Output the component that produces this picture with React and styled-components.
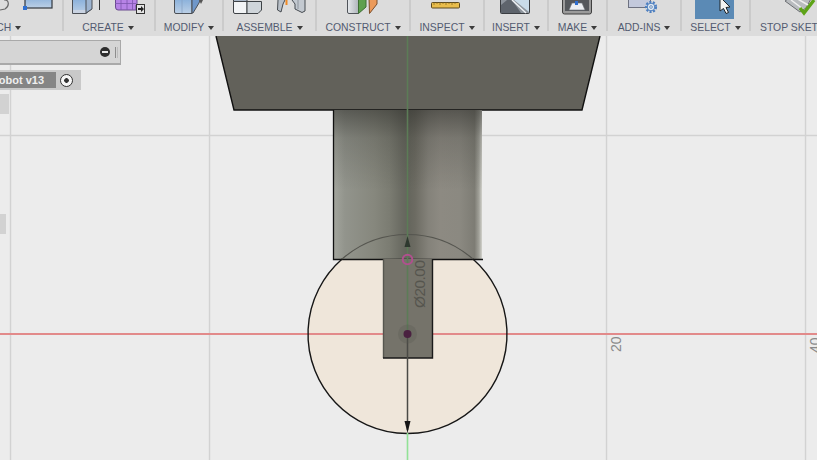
import { Fragment } from "react";
import styled, { createGlobalStyle } from "styled-components";

const GlobalStyle = createGlobalStyle`
  html, body {
    margin: 0;
    padding: 0;
    overflow: hidden;
    background: #ececec;
  }
`;

const Page = styled.div`
  width: 817px;
  height: 460px;
  display: flex;
  flex-direction: column;
  overflow: hidden;
  font-family: "Liberation Sans", Arial, sans-serif;
`;

const Toolbar = styled.div`
  height: 36px;
  flex: none;
  display: flex;
  background: #dcdcdc;
`;

const Group = styled.div`
  flex: none;
  width: ${(p) => p.$w}px;
  display: flex;
  flex-direction: column;
  align-items: center;
  overflow: hidden;
`;

const GroupIcons = styled.svg`
  display: block;
  flex: none;
  width: ${(p) => p.$w}px;
  height: 20px;
`;

const Label = styled.div`
  display: flex;
  align-items: center;
  gap: 4px;
  height: 13px;
  margin-top: 1px;
  font-size: 10.4px;
  white-space: nowrap;
  color: #525a70;
  transform: translateX(${(p) => p.$nudge || 0}px);
  align-self: ${(p) => p.$align || "center"};
`;

const Caret = styled.span`
  width: 0;
  height: 0;
  border-left: 3px solid transparent;
  border-right: 3px solid transparent;
  border-top: 4px solid #3c3c3c;
`;

const Separator = styled.div`
  flex: none;
  width: 2px;
  height: 31px;
  background: #cbcbcb;
`;

const Canvas = styled.div`
  position: relative;
  flex: 1;
  min-height: 0;
  background: #ececec;
`;

const Scene = styled.svg`
  display: block;
  width: 817px;
  height: 424px;
`;

const Browser = styled.div`
  position: absolute;
  left: 0;
  top: 4px;
  display: flex;
  flex-direction: column;
  align-items: flex-start;
`;

const BrowserHeader = styled.div`
  width: 121px;
  height: 25px;
  box-sizing: border-box;
  display: flex;
  align-items: center;
  justify-content: flex-end;
  gap: 5px;
  padding-right: 2px;
  background: #d5d5d5;
  border: 1px solid #a9a9a9;
  border-left: 0;
  border-bottom-width: 2px;
`;

const MinusButton = styled.span`
  position: relative;
  width: 10px;
  height: 10px;
  border-radius: 50%;
  background: #2e2e2e;

  &::after {
    content: "";
    position: absolute;
    left: 2px;
    right: 2px;
    top: 4px;
    height: 2px;
    background: #e8e8e8;
  }
`;

const Grip = styled.span`
  width: 1px;
  height: 11px;
  border-left: 1px solid #8d8d8d;
  border-right: 1px solid #bcbcbc;
`;

const DocumentRow = styled.div`
  margin-top: 5px;
  width: 81px;
  height: 20px;
  display: flex;
  align-items: center;
  justify-content: space-between;
  padding-right: 8px;
  box-sizing: border-box;
  background: #c9c9c9;
`;

const DocumentName = styled.div`
  width: 56px;
  height: 16px;
  display: flex;
  align-items: center;
  justify-content: flex-end;
  padding-right: 12px;
  box-sizing: border-box;
  overflow: hidden;
  white-space: nowrap;
  background: #858585;
  color: #efefef;
  font-size: 11px;
  font-weight: bold;
`;

const RadioButton = styled.span`
  width: 13px;
  height: 13px;
  box-sizing: border-box;
  border: 1.5px solid #333;
  border-radius: 50%;
  background: radial-gradient(circle, #333 0 2px, #f6f6f6 2.6px);
`;

const TreeStub = styled.div`
  width: ${(p) => p.$w}px;
  height: 20px;
  margin-top: ${(p) => p.$top}px;
  background: #d2d2d2;
`;

const SketchIcon = () => (
  <>
    <path d="M4 0 C9 -1 10 6 5 9 L0 10" fill="none" stroke="#666" strokeWidth="1.2" />
    <rect x="25" y="-4" width="27" height="12" fill="url(#toolBlue)" stroke="#33383e" strokeWidth="1.2" />
    <rect x="23" y="6" width="4" height="4" fill="#2f6fd0" />
  </>
);

const CreateIcon = () => (
  <>
    <path d="M72.5 -2 H91.5 V9 L86 13.5 H72.5 Z" fill="url(#toolBlue)" stroke="#4b4f55" />
    <path d="M73 10 H86 V13 H73 Z" fill="#c9d3e2" />
    <path d="M86 -2 H92 V9 L86 13 Z" fill="#9db4d0" stroke="#4b4f55" />
    <path d="M99.5 0 V10" stroke="#333" strokeWidth="1" />
    <path d="M115.5 -2 H137 V5 H136 V10 H118 Q115.5 10 115.5 7 Z" fill="#b783e6" stroke="#6a4a90" />
    <path d="M115 3.5 H136 M121 0 V10 M127 0 V10 M132.5 0 V10" stroke="#7d55ad" strokeWidth="0.8" />
    <rect x="136.5" y="4.5" width="8" height="9" fill="#e4e4e4" stroke="#333" />
    <path d="M138 8 H141 V6 L144 9 L141 12 V10 H138 Z" fill="#222" />
  </>
);

const ModifyIcon = () => (
  <>
    <path d="M174.5 -2 H192 V13.5 H176 Q174.5 13.5 174.5 12 Z" fill="url(#toolBlue)" stroke="#4b4f55" />
    <path d="M192 -2 H201 L199 3 L193 13 H192 Z" fill="#6f97c9" stroke="#4b4f55" />
    <path d="M199 0 L203 0 L201 4 Z" fill="#555" />
    <path d="M182 0 V13" stroke="#88a2c4" strokeWidth="0.8" />
  </>
);

const AssembleIcon = () => (
  <>
    <path d="M233.5 1.5 H247 V13.5 H235 Q233.5 13.5 233.5 12 Z" fill="#f2f4f6" stroke="#3e4246" />
    <path d="M247 1.5 H261.5 V10 L258 13.5 H247 Z" fill="#cfd5da" stroke="#3e4246" />
    <path d="M233.5 -2 V1.5 H247 V-2 Z" fill="#a9b6c6" stroke="#3e4246" />
    <path d="M278 0 L277.5 10 L281 12 L283 4 L285 0" fill="#b9c0c8" stroke="#454a50" />
    <path d="M286.5 0 V5" stroke="#f08a24" strokeWidth="2" />
    <path d="M292 0 L295 4 V9 L302 12.5 L305 11 V0" fill="#c3c9d0" stroke="#454a50" />
    <path d="M298 0 V9" stroke="#8d949c" />
  </>
);

const ConstructIcon = () => (
  <>
    <path d="M347.5 -2 H358.5 V13.5 H349 Q347.5 13.5 347.5 12 Z" fill="url(#toolGrey)" stroke="#50545a" />
    <path d="M358.5 -2 H366 V7 L358.5 13.5 Z" fill="#5ea04e" stroke="#3d6e34" />
    <path d="M369 -2 H377 V4 L369.5 13.5 Z" fill="#ec9a5a" stroke="#7a4d2a" />
  </>
);

const InspectIcon = () => (
  <>
    <rect x="431.5" y="2.5" width="28" height="5.5" rx="1" fill="#e9bd4c" stroke="#5d4a20" />
    <path d="M434 2.5 V5 M437 2.5 V4 M440 2.5 V5 M443 2.5 V4 M446 2.5 V5 M449 2.5 V4 M452 2.5 V5 M455 2.5 V4" stroke="#8c6f23" strokeWidth="0.8" />
  </>
);

const InsertIcon = () => (
  <>
    <rect x="500.5" y="-3" width="29" height="16.5" rx="1" fill="#8e959d" stroke="#3a3d41" />
    <path d="M501 13 V5 L507 0 H512 L521 13 Z" fill="#5e646c" />
    <path d="M514 0 L529 12 V0 Z" fill="#c9dbe9" />
    <path d="M512 0 L526 13" stroke="#f0f3f6" strokeWidth="1.4" />
  </>
);

const MakeIcon = () => (
  <>
    <rect x="562.5" y="-3" width="29" height="17" rx="2" fill="#9b9b9b" stroke="#3f3f3f" />
    <rect x="565" y="-1" width="24" height="12" fill="#55585c" />
    <path d="M569 10 L572 3 H582 L585 10 Z" fill="#eceff2" stroke="#6c7075" strokeWidth="0.6" />
    <path d="M576.5 1 V5" stroke="#2f6fd0" strokeWidth="3" />
  </>
);

const AddInsIcon = () => (
  <>
    <rect x="628.5" y="-3" width="22" height="10.5" fill="#c3c9dc" stroke="#6d7180" />
    <circle cx="651" cy="7" r="4.8" fill="none" stroke="#4d7fc0" strokeWidth="2.6" strokeDasharray="2 1.4" />
    <circle cx="651" cy="7" r="3.8" fill="#dfe8f2" stroke="#4d7fc0" strokeWidth="1" />
    <circle cx="651" cy="7" r="1.4" fill="#dcdcdc" stroke="#4d7fc0" strokeWidth="0.7" />
  </>
);

const SelectIcon = () => (
  <>
    <rect x="695" y="-2" width="39" height="21" fill="#5b8ab5" />
    <path d="M720 -3 L720 11 L723.5 8.5 L726 13.5 L728.5 12.5 L726 7.5 L730 7 Z" fill="#f4f4f4" stroke="#1f2428" strokeWidth="1" />
  </>
);

const StopSketchIcon = () => (
  <>
    <path d="M785 1 L791 -3 L812 -3 L806 8 L800 12 Z" fill="#b9bcbf" stroke="#6b6e72" />
    <path d="M791 0 L803 9 M796 -2 L808 5" stroke="#efefef" strokeWidth="1.5" />
    <path d="M800 8 L804 13 L814 0" fill="none" stroke="#5da317" strokeWidth="3.4" />
  </>
);

// x0 / x1 are the page columns of each group, the icons are drawn in page coordinates
const groups = [
  { x0: 0, x1: 62, label: "SKETCH", icon: SketchIcon, align: "flex-start", nudge: -31 },
  { x0: 64, x1: 154, label: "CREATE", icon: CreateIcon, nudge: -1 },
  { x0: 156, x1: 222, label: "MODIFY", icon: ModifyIcon },
  { x0: 224, x1: 315, label: "ASSEMBLE", icon: AssembleIcon },
  { x0: 317, x1: 409, label: "CONSTRUCT", icon: ConstructIcon },
  { x0: 411, x1: 483, label: "INSPECT", icon: InspectIcon },
  { x0: 485, x1: 547, label: "INSERT", icon: InsertIcon },
  { x0: 549, x1: 606, label: "MAKE", icon: MakeIcon },
  { x0: 608, x1: 680, label: "ADD-INS", icon: AddInsIcon },
  { x0: 682, x1: 749, label: "SELECT", icon: SelectIcon },
  { x0: 751, x1: 817, label: "STOP SKETCH", icon: StopSketchIcon, align: "flex-start", nudge: 9, noCaret: true, last: true },
];

function ToolGroup({ x0, x1, label, icon: Icon, align, nudge, noCaret }) {
  const w = x1 - x0;
  return (
    <Group $w={w}>
      <GroupIcons $w={w} viewBox={`${x0} 0 ${w} 20`}>
        <Icon />
      </GroupIcons>
      <Label $align={align} $nudge={nudge}>
        {label}
        {!noCaret && <Caret />}
      </Label>
    </Group>
  );
}

function CadScene() {
  return (
    <Scene viewBox="0 36 817 424">
      <defs>
        <linearGradient id="cylinderShade" x1="333" x2="482" y1="0" y2="0" gradientUnits="userSpaceOnUse">
          <stop offset="0" stopColor="#a4a69e" />
          <stop offset="0.08" stopColor="#92948c" />
          <stop offset="0.28" stopColor="#86877d" />
          <stop offset="0.38" stopColor="#7b7c72" />
          <stop offset="0.46" stopColor="#6a6b62" />
          <stop offset="0.5" stopColor="#64655c" />
          <stop offset="0.55" stopColor="#6c6b62" />
          <stop offset="0.64" stopColor="#84827a" />
          <stop offset="0.72" stopColor="#8d8a82" />
          <stop offset="0.85" stopColor="#8b8981" />
          <stop offset="0.95" stopColor="#7d7c74" />
          <stop offset="0.98" stopColor="#a2a29a" />
          <stop offset="1" stopColor="#d2d2cc" />
        </linearGradient>
        <linearGradient id="cylinderTop" x1="0" x2="0" y1="110" y2="190" gradientUnits="userSpaceOnUse">
          <stop offset="0" stopColor="#2c2c28" stopOpacity="0.55" />
          <stop offset="0.35" stopColor="#2c2c28" stopOpacity="0.2" />
          <stop offset="1" stopColor="#2c2c28" stopOpacity="0" />
        </linearGradient>
      </defs>

      {/* grid */}
      <path d="M10.5 36 V460 M209.5 36 V460 M606.5 36 V460 M805.5 36 V460 M0 135.5 H817" stroke="#d2d2d2" strokeWidth="1.4" />
      <text transform="translate(621 352) rotate(-90)" fontFamily="Liberation Sans" fontSize="14" fill="#8a8a8a">20</text>
      <text transform="translate(820 353) rotate(-90)" fontFamily="Liberation Sans" fontSize="14" fill="#8a8a8a">40</text>

      {/* sketch profile */}
      <circle cx="407.5" cy="334" r="99.5" fill="#efe6da" />
      <path d="M0 334 H817" stroke="#e28a8a" strokeWidth="2" />

      {/* body */}
      <path d="M216 36 H600 L582 110 H234 Z" fill="#62615a" />
      <path d="M216 36 L234 110 H582 L600 36" fill="none" stroke="#111" strokeWidth="1.4" />
      <rect x="333" y="110" width="149" height="149" fill="url(#cylinderShade)" />
      <rect x="333" y="110" width="149" height="149" fill="url(#cylinderTop)" />
      <path d="M333.5 110 V259.5 H483" fill="none" stroke="#111" strokeWidth="1.3" />

      <rect x="383" y="259" width="50" height="99" fill="#75736a" />
      <path d="M383.5 259 V358" fill="none" stroke="#56564f" strokeWidth="1.4" />
      <path d="M383 358 H432.5 V259" fill="none" stroke="#1a1a1a" strokeWidth="1.4" />

      {/* circle outline, fainter where it runs over the cylinder */}
      <path d="M342.1 259 A99.5 99.5 0 0 1 472.9 259" fill="none" stroke="#55554f" strokeWidth="1.2" />
      <path d="M472.9 259 A99.5 99.5 0 1 1 342.1 259" fill="none" stroke="#161616" strokeWidth="1.4" />

      {/* axis */}
      <path d="M407.5 36 V334" stroke="#5c7c57" strokeWidth="1.6" />
      <path d="M407.5 433 V460" stroke="#92e296" strokeWidth="1.6" />

      {/* diameter dimension */}
      <path d="M407.5 334 V430" stroke="#4a4a46" strokeWidth="1.5" />
      <path d="M404.5 421 H410.5 L407.5 433 Z" fill="#151515" />
      <path d="M407.5 236 L410.5 247 H404.5 Z" fill="#2e382f" />
      <text transform="translate(424.5 308) rotate(-90)" fontFamily="Liberation Sans" fontSize="15.4" textLength="48" fill="#55554e">Ø20.00</text>
      <circle cx="407.5" cy="259.5" r="4.8" fill="none" stroke="#b0508e" strokeWidth="2" />
      <circle cx="407.5" cy="334" r="9.5" fill="#55554e" fillOpacity="0.28" />
      <circle cx="407.5" cy="334" r="4" fill="#4a2140" />
    </Scene>
  );
}

export default function App() {
  return (
    <Page>
      <GlobalStyle />
      <svg width="0" height="0" style={{ position: "absolute" }}>
        <defs>
          <linearGradient id="toolBlue" x1="0" x2="0" y1="0" y2="1">
            <stop offset="0" stopColor="#86aeda" />
            <stop offset="1" stopColor="#bcd0e6" />
          </linearGradient>
          <linearGradient id="toolGrey" x1="0" x2="1" y1="0" y2="0">
            <stop offset="0" stopColor="#e6e9ec" />
            <stop offset="1" stopColor="#aeb4bb" />
          </linearGradient>
        </defs>
      </svg>
      <Toolbar>
        {groups.map((g) => (
          <Fragment key={g.label}>
            <ToolGroup {...g} />
            {!g.last && <Separator />}
          </Fragment>
        ))}
      </Toolbar>
      <Canvas>
        <CadScene />
        <Browser>
          <BrowserHeader>
            <MinusButton />
            <Grip />
          </BrowserHeader>
          <DocumentRow>
            <DocumentName>robot v13</DocumentName>
            <RadioButton />
          </DocumentRow>
          <TreeStub $w={9} $top={4} />
          <TreeStub $w={6} $top={100} />
        </Browser>
      </Canvas>
    </Page>
  );
}
